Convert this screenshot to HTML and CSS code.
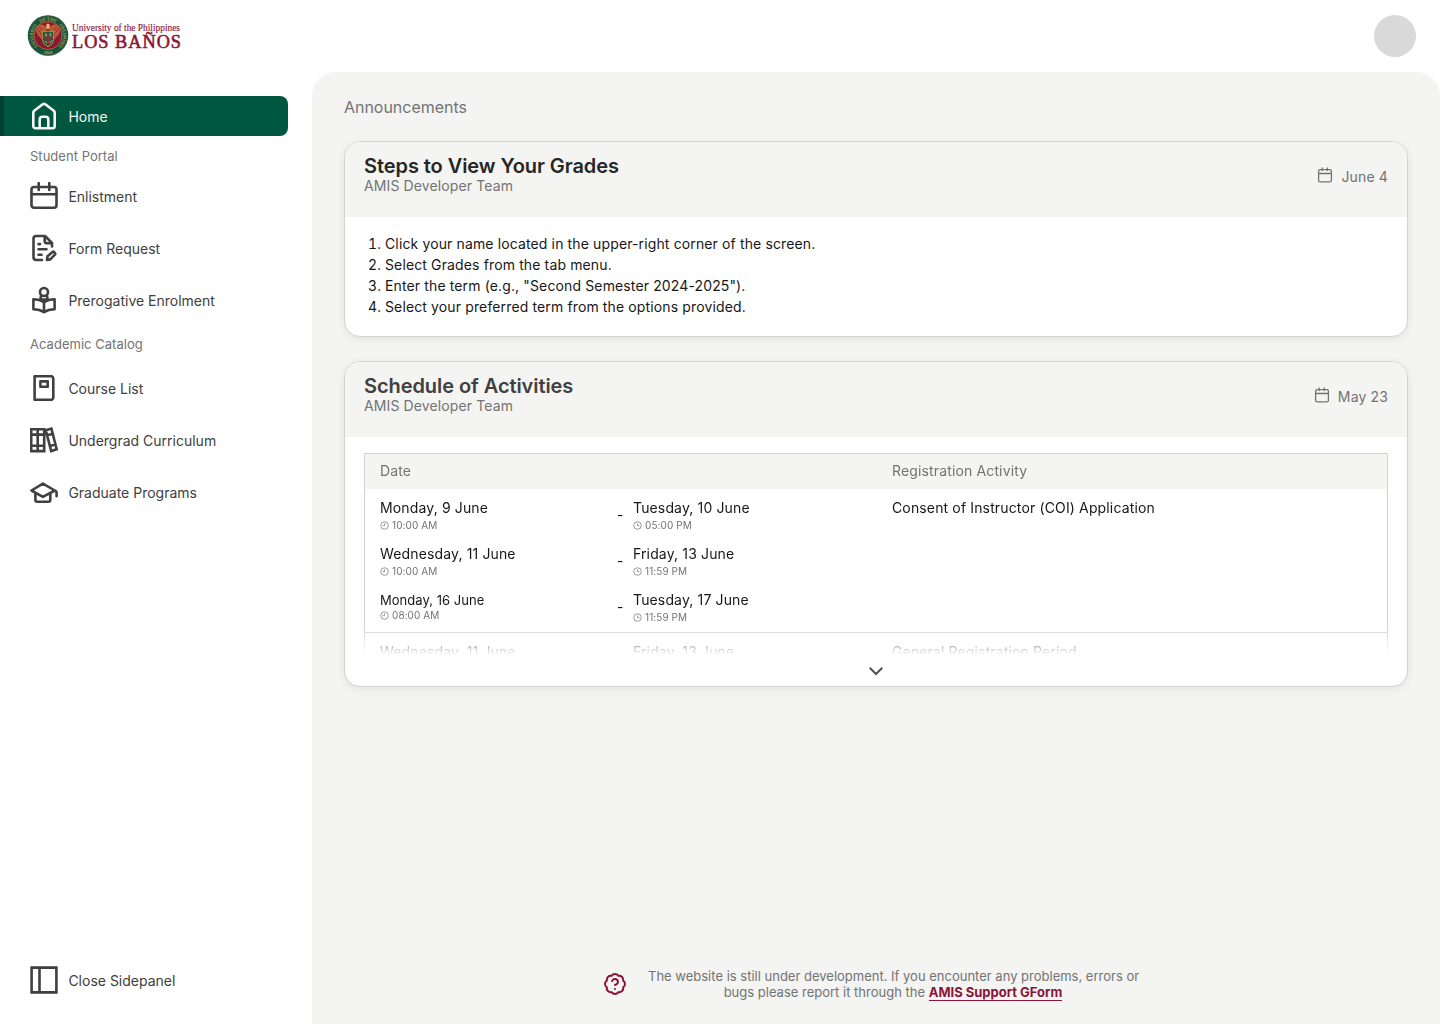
FILE: index.html
```html
<!DOCTYPE html>
<html lang="en">
<head>
<meta charset="utf-8">
<title>AMIS - Home</title>
<link rel="stylesheet" href="styles.css">
</head>
<body>
<svg class="defs" width="0" height="0" aria-hidden="true">
  <symbol id="cal" viewBox="0 0 28 28"><rect x="1.5" y="5" width="25" height="20.7" rx="2.5"/><path d="M1.5 12.3h25M8.7 1v7M19.3 1v7"/></symbol>
  <symbol id="cal-small" viewBox="0 0 16 16"><rect x="1.600" y="2.600" width="12.800" height="12.300" rx="1.500"/><path d="M1.600 6.500h12.800M5.200.500v3.500M10.300.500v3.500"/></symbol>
  <symbol id="clock" viewBox="0 0 10 10"><circle cx="5" cy="5" r="4.2"/><path d="M5 2.600V5.200H2.800"/></symbol>
  <symbol id="clock-r" viewBox="0 0 10 10"><circle cx="5" cy="5" r="4.2"/><path d="M5 2.600V5.200H7.200"/></symbol>
</svg>
<header class="topbar">
  <svg class="logo" width="156" height="44" viewBox="0 0 156 44" role="img" aria-label="University of the Philippines Los Baños">
    <defs><path id="ring-top" d="M6 21.5a15 15 0 0 1 30 0"/><path id="ring-l" d="M10.500 32.200A15 15 0 0 1 10 11.300"/><path id="ring-r" d="M32 11.300A15 15 0 0 1 31.500 32.200"/></defs>
    <circle cx="21" cy="21.5" r="20.3" fill="#17523d"/>
    <circle cx="21" cy="21.5" r="19.3" fill="none" stroke="#4e6b3c" stroke-width=".6"/>
    <circle cx="21" cy="21.5" r="14" fill="#8c1733" stroke="#d2a54a" stroke-width=".5"/>
    <g class="ring-text"><text><textPath href="#ring-top" startOffset="50%" text-anchor="middle">OF THE</textPath></text>
    <text><textPath href="#ring-l" textLength="23" lengthAdjust="spacingAndGlyphs">UNIVERSITY</textPath></text>
    <text><textPath href="#ring-r" textLength="23" lengthAdjust="spacingAndGlyphs">PHILIPPINES</textPath></text>
    <text x="21" y="40" text-anchor="middle">1908</text></g>
    <path d="M20 14C17 10 12 9 8.500 14c.5 4 1.500 7 4.500 9.500l2 2-.5-5.500 4.500-3zM22 14c3-4 8-5 11.500 0-.5 4-1.500 7-4.500 9.500l-2 2 .5-5.500-4.500-3z" fill="#bb5a35"/>
    <path d="M10 14l5 7M12.500 12.500l4 6M32 14l-5 7M29.500 12.500l-4 6" stroke="#8c2a2f" stroke-width=".8"/>
    <path d="M19 11q2-3 4 0l-.7 4h-2.600z" fill="#dcb36b"/>
    <path d="M15.300 17.200h11.400v8.300q0 4.500-5.700 7.300-5.700-2.800-5.700-7.300z" fill="#215a3e" stroke="#d8a949" stroke-width=".8"/>
    <path d="M16 22.500h10v2H16zM20 24.500h2v6h-2z" fill="#9d2940"/>
    <path d="M18 19.500l2 1.500-2 1M24 19l-1.500 2 2 .8M18 27l2 2M24.500 26.500l-2 2.500" stroke="#e2b857" stroke-width=".9"/>
    <text class="uni" x="45" y="16.500" textLength="108" lengthAdjust="spacingAndGlyphs">University of the Philippines</text>
    <text class="campus" x="45" y="33.500" textLength="109">LOS BAÑOS</text>
  </svg>
  <div class="avatar"></div>
</header>
<div class="shell">
  <nav class="side">
    <a class="item active"><svg class="icon"><path d="M3.3 10.8q0-1.2.9-2L12.7 2.300q1.300-1 2.600 0l8.500 6.500q.9.800.9 2V24q0 2.200-2.200 2.200h-17Q3.300 26.200 3.300 24zM9.700 26V17.500q0-2.700 2.700-2.700h3.200q2.700 0 2.700 2.700V26"/></svg><span>Home</span></a>
    <div class="label first">Student Portal</div>
    <div class="group">
      <a class="item"><svg class="icon"><use href="#cal"/></svg><span>Enlistment</span></a>
      <a class="item"><svg class="icon"><path d="M12 26H6.200Q3.500 26 3.500 23.300V4.700Q3.500 2 6.200 2H15l7 7v3.500M14.700 2.500v4.200q0 2.600 2.600 2.600h4.500M8.500 10.100H10M8.500 15.300h8M8.500 20.700h3"/><path d="M17 26l.5-3.700 5-4.300q.8-.7 1.500 0l1 1.200q.6.800-.1 1.500l-4.600 4.700z"/></svg><span>Form Request</span></a>
      <a class="item"><svg class="icon"><circle cx="14" cy="6" r="4"/><path d="M14 16.200c-3-2-6.800-2.900-10.600-2.900v10c3.800 0 7.600.8 10.600 2.800 3-2 6.800-2.800 10.600-2.800v-10c-3.800 0-7.600.9-10.600 2.900zv9.500M14 16V25.500M11 9.500l-.6 4M17 9.500l.6 4M11 13.500h6"/></svg><span>Prerogative Enrolment</span></a>
    </div>
    <div class="label">Academic Catalog</div>
    <div class="group catalog">
      <a class="item"><svg class="icon"><path d="M4.600 2.200h17q1.700 1 1.700 2.500v19q0 1.200-1.700 2.100h-17zM10.400 7.400h7.300v5.300h-7.300z"/></svg><span>Course List</span></a>
      <a class="item"><svg class="icon books"><path d="M1.200 3.300h13v21.800h-13zM7.700 3.300v21.800M1.200 8.600h13M1.200 19.700h13M15.800 4.300l5.600-1.700 5.300 20.700-5.500 1.700zM17.200 9.300l5.600-1.600M19.800 20l5.600-1.600"/></svg><span>Undergrad Curriculum</span></a>
      <a class="item"><svg class="icon"><path d="M1.500 12.500L12.900 5.600l11.900 6.900-11.900 6.400zM5.400 15.500v6.300q0 1.900 1.900 1.900h11.100q1.900 0 1.900-1.900v-6.300M24.500 12.500q2.100.6 2.100 2.200v3.500"/></svg><span>Graduate Programs</span></a>
    </div>
    <a class="item close"><svg class="icon"><path d="M1.600 1.600h24.800v24.800H1.600zM9.500 1.600v24.800"/></svg><span>Close Sidepanel</span></a>
  </nav>
  <main class="main">
    <h1>Announcements</h1>
    <section class="card">
      <div class="head"><div><h2>Steps to View Your Grades</h2><p class="by">AMIS Developer Team</p></div>
        <div class="when"><svg><use href="#cal-small"/></svg><span>June 4</span></div></div>
      <ol class="steps">
        <li>Click your name located in the upper-right corner of the screen.</li>
        <li>Select Grades from the tab menu.</li>
        <li>Enter the term (e.g., "Second Semester 2024-2025").</li>
        <li>Select your preferred term from the options provided.</li>
      </ol>
    </section>
    <section class="card schedule">
      <div class="head"><div><h2>Schedule of Activities</h2><p class="by">AMIS Developer Team</p></div>
        <div class="when"><svg><use href="#cal-small"/></svg><span>May 23</span></div></div>
      <div class="table">
        <div class="row th"><span>Date</span><span></span><span></span><span>Registration Activity</span></div>
        <div class="row"><div><b>Monday, 9 June</b><small><svg><use href="#clock"/></svg>10:00 AM</small></div><i>-</i><div><b>Tuesday, 10 June</b><small><svg><use href="#clock-r"/></svg>05:00 PM</small></div><b>Consent of Instructor (COI) Application</b></div>
        <div class="row"><div><b>Wednesday, 11 June</b><small><svg><use href="#clock"/></svg>10:00 AM</small></div><i>-</i><div><b>Friday, 13 June</b><small><svg><use href="#clock-r"/></svg>11:59 PM</small></div></div>
        <div class="row"><div class="compact"><b>Monday, 16 June</b><small><svg><use href="#clock"/></svg>08:00 AM</small></div><i>-</i><div><b>Tuesday, 17 June</b><small><svg><use href="#clock-r"/></svg>11:59 PM</small></div></div>
        <div class="row next"><b>Wednesday, 11 June</b><i></i><b>Friday, 13 June</b><b>General Registration Period</b></div>
      </div>
      <svg class="chevron" viewBox="0 0 16 10"><path d="M1.700 1.700L8 8l6.300-6.300"/></svg>
    </section>
    <footer class="foot">
      <svg class="help" viewBox="0 0 24 24"><path d="M3.850 8.620a4 4 0 0 1 4.780-4.770 4 4 0 0 1 6.740 0 4 4 0 0 1 4.780 4.780 4 4 0 0 1 0 6.740 4 4 0 0 1-4.770 4.780 4 4 0 0 1-6.750 0 4 4 0 0 1-4.780-4.770 4 4 0 0 1 0-6.760z"/><path d="M9.090 9a3 3 0 0 1 5.830 1c0 2-3 3-3 3M12 17h.01"/></svg>
      <p>The website is still under development. If you encounter any problems, errors or<br>bugs please report it through the <a>AMIS Support GForm</a></p>
    </footer>
  </main>
</div>
</body>
</html>
```
FILE: styles.css
```css
* { box-sizing: border-box; margin: 0; padding: 0; }
body { width: 1440px; height: 1024px; overflow: hidden; background: #fff; font: 14px/20px Inter, sans-serif; color: #404040; display: flex; flex-direction: column; }
svg { fill: none; flex: none; }
.defs { display: none; }
.topbar { height: 72px; flex: none; display: flex; align-items: center; justify-content: space-between; padding: 0 24px 0 27px; }
.logo { overflow: visible; }
.avatar { width: 42px; height: 42px; border-radius: 50%; background: #d9d9d9; }
.uni { font: 10.5px "Liberation Serif", serif; fill: #8c1538; stroke: #8c1538; stroke-width: .15; }
.campus { font: 18.3px "Liberation Serif", serif; fill: #8c1538; stroke: #8c1538; stroke-width: .6; }
.ring-text { font: bold 4.5px "Liberation Serif", serif; fill: #bfa04f; }
.shell { flex: 1; display: flex; min-height: 0; }
.side { width: 312px; padding: 24px 24px 24px 0; display: flex; flex-direction: column; }
.item { height: 40px; display: flex; align-items: center; gap: 10.4px; padding-left: 30px; }
.item span { padding-top: 1px; }
.active { background: #00573f; color: #f5f5f4; border-left: 4px solid #00412f; padding-left: 26px; border-radius: 0 8px 8px 0; }
.icon { width: 28px; height: 28px; stroke: currentColor; stroke-width: 2.6; stroke-linejoin: round; stroke-linecap: round; }
.icon.books { stroke-linejoin: miter; }
.label { margin: 14px 0 14px 30px; font-size: 13px; letter-spacing: .03px; color: #737373; }
.label.first { margin: 10px 0 10px 30px; }
.group { display: flex; flex-direction: column; gap: 12px; }
.close { margin-top: auto; }
.close .icon { stroke-linejoin: miter; }
.main { flex: 1; background: #f4f4f2; border-radius: 24px 24px 0 0; padding: 25px 32px 24px; display: flex; flex-direction: column; }
h1 { font-size: 16px; font-weight: 400; letter-spacing: -.03px; color: #737373; line-height: 20px; margin-bottom: 24px; }
.card { border: 1px solid #d2d3d3; border-radius: 16px; background: #fff; box-shadow: 0 2px 8px rgba(0,0,0,.08); overflow: hidden; height: 196px; flex: none; }
.schedule { height: 326px; margin-top: 24px; }
.head { height: 75px; background: #f4f4f2; padding: 13px 19px 0; display: flex; justify-content: space-between; }
h2 { font-size: 20px; line-height: 22px; font-weight: 600; letter-spacing: -.07px; color: #262626; }
.schedule h2 { color: #404040; }
.by { letter-spacing: .12px; line-height: 18px; color: #737373; }
.when { display: flex; gap: 8px; color: #737373; letter-spacing: .14px; padding-top: 12px; }
.when svg { width: 16px; height: 16px; stroke: #737373; stroke-width: 1.3; }
.steps { padding: 16px 19px 0 40px; line-height: 21px; color: #171717; letter-spacing: .13px; }
.table { margin: 16px 19px 0; height: 202px; border: 1px solid #d2d3d3; border-bottom: 0; overflow: hidden; -webkit-mask-image: linear-gradient(#000 174px, transparent); mask-image: linear-gradient(#000 174px, transparent); }
.row { display: grid; grid-template-columns: 237px 16px 259px 1fr; height: 46px; padding: 9px 15px 0; color: #171717; line-height: 20px; letter-spacing: .14px; }
.th { height: 35px; background: #f4f4f2; color: #737373; padding-top: 7px; }
.row b { font-weight: 400; display: block; }
.row i { font-style: normal; padding-top: 7px; }
.row small { display: flex; align-items: center; gap: 3px; font-size: 10px; line-height: 14px; color: #737373; letter-spacing: .08px; }
.row small svg { width: 9px; height: 9px; stroke: #737373; stroke-width: .8; }
.compact b { font-size: 13px; letter-spacing: .03px; }
.compact small { margin-top: -2px; }
.next { border-top: 1px solid #d2d3d3; margin-top: 5px; }
.chevron { display: block; width: 16px; height: 10px; margin: 11px auto 0; stroke: #525252; stroke-width: 2; }
.foot { margin-top: auto; display: flex; align-items: center; gap: 21px; padding-left: 259px; font-size: 13px; line-height: 16px; color: #737373; text-align: center; white-space: nowrap; }
.help { width: 24px; height: 26px; stroke: #8a1538; stroke-width: 2; stroke-linecap: round; stroke-linejoin: round; }
.foot p { width: 490px; }
.foot a { color: #8a1538; font-weight: 700; border-bottom: 1px solid #8a1538; }
```
